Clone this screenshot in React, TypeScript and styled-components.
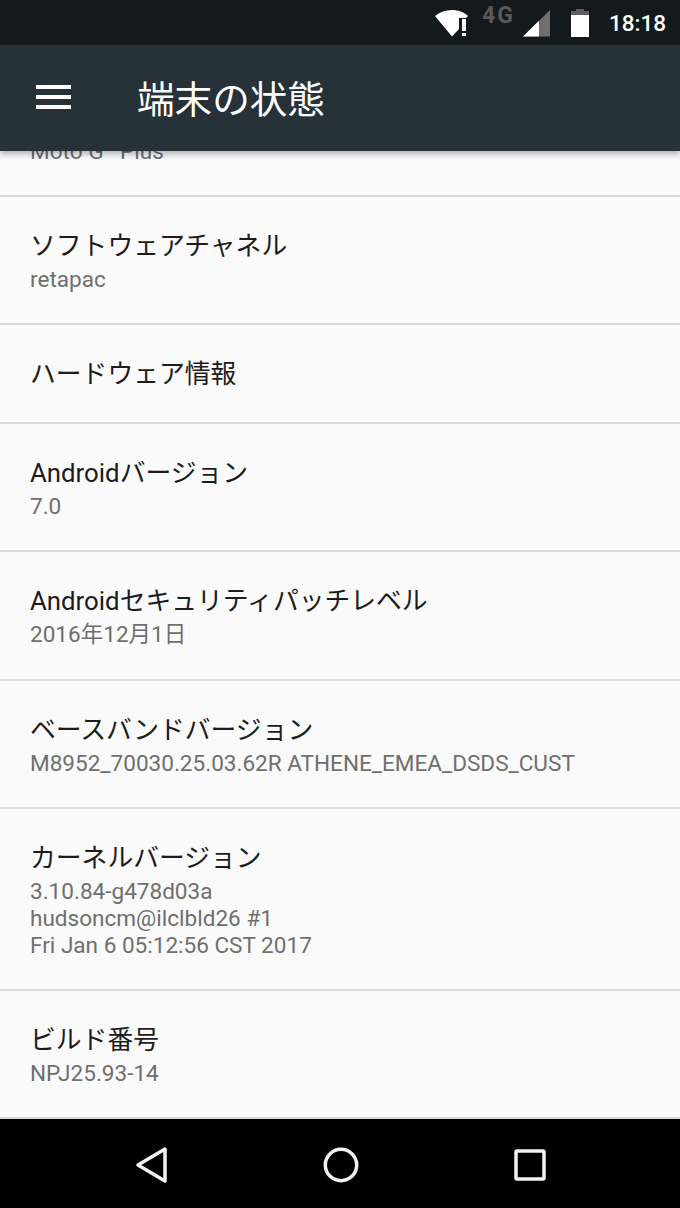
import * as React from 'react';
import styled, { createGlobalStyle } from 'styled-components';

const GlobalStyle = createGlobalStyle`
  html, body {
    margin: 0;
    padding: 0;
    background: #fafafa;
  }
`;

const Screen = styled.div`
  width: 680px;
  height: 1208px;
  display: flex;
  flex-direction: column;
  overflow: hidden;
  font-family: Roboto, "Noto Sans CJK JP", sans-serif;
`;

const StatusBar = styled.div`
  height: 45px;
  flex-shrink: 0;
  background: #14191c;
  display: flex;
  align-items: center;
  justify-content: flex-end;
  padding-right: 14px;
  color: #fff;
`;

const Clock = styled.span`
  font-size: 22.5px;
  font-weight: 500;
  margin-left: 20px;
`;

const NetworkType = styled.span`
  font-size: 23px;
  line-height: 20px;
  font-weight: 700;
  letter-spacing: 2px;
  color: #5a5a5a;
  margin: 0 0 13px 14px;
`;

const StatusIcon = styled.svg<{ $left?: number }>`
  display: block;
  margin-left: ${(p) => p.$left || 0}px;
`;

const Toolbar = styled.div`
  height: 106px;
  flex-shrink: 0;
  background: #263238;
  display: flex;
  align-items: center;
  padding-left: 36px;
  box-shadow: 0 3px 6px rgba(0, 0, 0, 0.3);
  position: relative;
  z-index: 1;
`;

const MenuIcon = styled.div`
  width: 35px;
  height: 24px;
  display: flex;
  flex-direction: column;
  justify-content: space-between;
  margin-right: 66px;
  margin-top: -2px;

  span {
    display: block;
    height: 4px;
    background: #fff;
  }
`;

const Title = styled.h1`
  margin: -4px 0 0;
  color: #fff;
  font-size: 37.6px;
  font-weight: 400;
`;

const List = styled.div`
  flex: 1;
  min-height: 0;
  display: flex;
  flex-direction: column;
  justify-content: flex-end;
  overflow: hidden;
  background: #fafafa;
`;

const Row = styled.div<{ $height: number; $top: number }>`
  height: ${(p) => p.$height}px;
  flex-shrink: 0;
  box-sizing: border-box;
  border-bottom: 2px solid #d9d9d9;
  padding: ${(p) => p.$top}px 30px 0;
`;

const RowTitle = styled.div`
  font-size: 25.8px;
  line-height: 36px;
  color: #1c1c1c;
  margin-bottom: 2px;
`;

const RowValue = styled.div`
  font-size: 22.55px;
  line-height: 27px;
  color: #6f6f6f;
`;

const Sup = styled.sup`
  font-size: 16px;
  line-height: 0;
  margin-right: 2px;
`;

const NavBar = styled.div`
  height: 89px;
  flex-shrink: 0;
  box-sizing: border-box;
  background: #000;
  display: flex;
  align-items: center;
  justify-content: space-between;
  padding: 3px 134px 0 134px;
`;

const rows: { title?: string; values: React.ReactNode[]; height: number }[] = [
  { values: [<React.Fragment>Moto G<Sup>4</Sup> Plus</React.Fragment>], height: 128 },
  { title: 'ソフトウェアチャネル', values: ['retapac'], height: 128 },
  { title: 'ハードウェア情報', values: [], height: 99 },
  { title: 'Androidバージョン', values: ['7.0'], height: 128 },
  { title: 'Androidセキュリティパッチレベル', values: ['2016年12月1日'], height: 129 },
  { title: 'ベースバンドバージョン', values: ['M8952_70030.25.03.62R ATHENE_EMEA_DSDS_CUST'], height: 128 },
  {
    title: 'カーネルバージョン',
    values: ['3.10.84-g478d03a', 'hudsoncm@ilclbld26 #1', 'Fri Jan 6 05:12:56 CST 2017'],
    height: 182,
  },
  { title: 'ビルド番号', values: ['NPJ25.93-14'], height: 128 },
];

const App = () => {
  return (
    <Screen>
      <GlobalStyle />
      <StatusBar>
        <StatusIcon width="36" height="28" viewBox="0 0 36 28">
          <path d="M3 7 C12 -1 28 -1 36 7 L34 9 L27 9 L27 20 L20 27.5 Z" fill="#fff" />
          <rect x="30" y="10" width="4" height="12" fill="#fff" />
          <rect x="30" y="24" width="4" height="3" fill="#fff" />
        </StatusIcon>
        <NetworkType>4G</NetworkType>
        <StatusIcon $left={7} width="28" height="28" viewBox="0 0 28 28">
          <path d="M1 27.5 L28 1 L28 27.5 Z" fill="#6e6e6e" />
          <path d="M1 27.5 L17 11.8 L17 27.5 Z" fill="#fff" />
        </StatusIcon>
        <StatusIcon $left={21} width="18" height="28" viewBox="0 0 18 28">
          <path d="M5 0 H13 V2 H18 V6 H0 V2 H5 Z" fill="#5e5e5e" />
          <rect x="0" y="6" width="18" height="22" fill="#fff" />
        </StatusIcon>
        <Clock>18:18</Clock>
      </StatusBar>
      <Toolbar>
        <MenuIcon>
          <span />
          <span />
          <span />
        </MenuIcon>
        <Title>端末の状態</Title>
      </Toolbar>
      <List>
        {rows.map((row, index) => (
          <Row key={index} $height={row.height} $top={row.title ? 31 : 69}>
            {row.title ? <RowTitle>{row.title}</RowTitle> : null}
            {row.values.map((value, valueIndex) => (
              <RowValue key={valueIndex}>{value}</RowValue>
            ))}
          </Row>
        ))}
      </List>
      <NavBar>
        <svg width="34" height="38" viewBox="0 0 34 38">
          <path d="M31 3 L4 19 L31 35 Z" fill="none" stroke="#f2f2f2" strokeWidth="3.5" strokeLinejoin="round" />
        </svg>
        <svg width="36" height="36" viewBox="0 0 36 36">
          <circle cx="18" cy="18" r="15.7" fill="none" stroke="#f2f2f2" strokeWidth="3.5" />
        </svg>
        <svg width="32" height="32" viewBox="0 0 32 32">
          <rect x="2" y="2" width="28" height="28" rx="1" fill="none" stroke="#f2f2f2" strokeWidth="3.5" />
        </svg>
      </NavBar>
    </Screen>
  );
};

export default App;
